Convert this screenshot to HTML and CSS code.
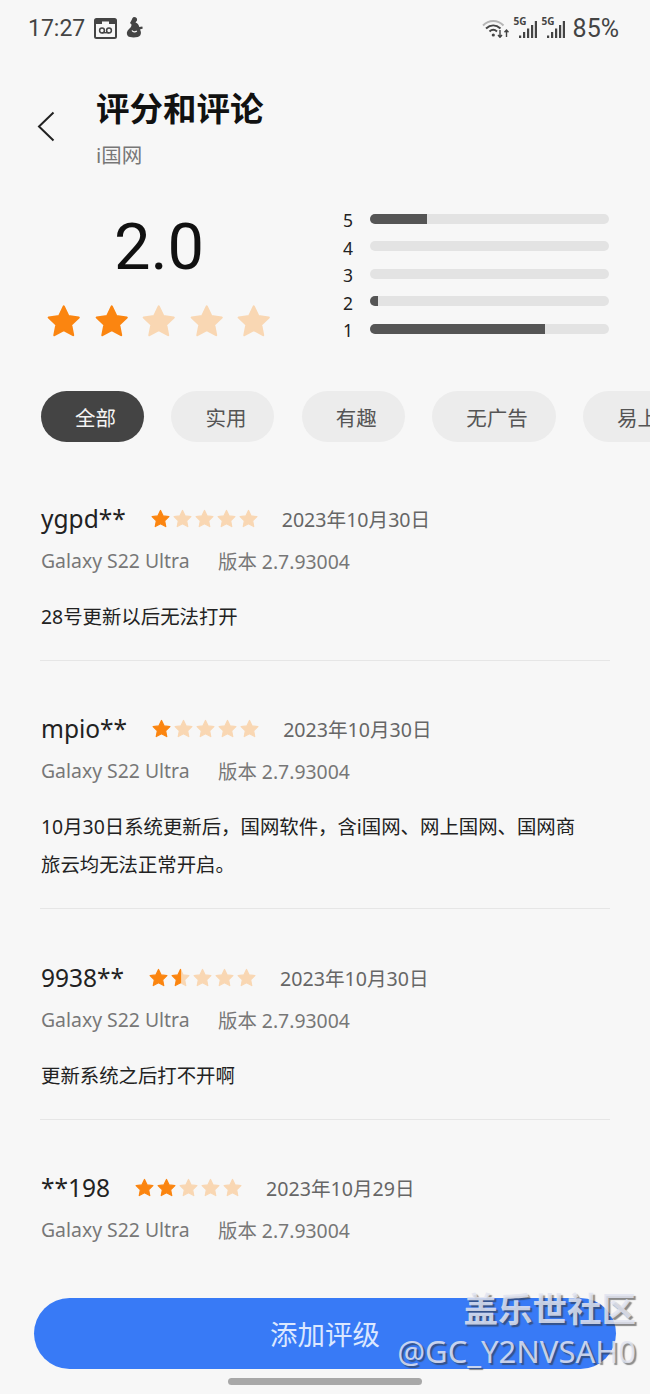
FILE: index.html
```html
<!DOCTYPE html>
<html lang="zh-CN">
<head>
  <meta charset="UTF-8">
  <meta name="viewport" content="width=device-width, initial-scale=1.0">
  <title>评分和评论</title>
  <link rel="stylesheet" href="styles.css">
</head>
<body>
  <svg class="defs" width="0" height="0">
    <defs>
      <symbol id="star" viewBox="0 0 24 24">
        <polygon points="12,2.8 14.9,9 21.6,9.9 16.7,14.5 18,21.2 12,17.9 6,21.2 7.3,14.5 2.4,9.9 9.1,9" stroke-width="1.4" stroke-linejoin="round" fill="currentColor" stroke="currentColor"/>
      </symbol>
      <symbol id="star-half" viewBox="0 0 24 24">
        <polygon points="12,2.8 14.9,9 21.6,9.9 16.7,14.5 18,21.2 12,17.9" stroke-width="1.4" stroke-linejoin="round" fill="#f9d7b3" stroke="#f9d7b3"/>
        <polygon points="12,2.8 12,17.9 6,21.2 7.3,14.5 2.4,9.9 9.1,9" stroke-width="1.4" stroke-linejoin="round" fill="#fb8510" stroke="#fb8510"/>
      </symbol>
      <symbol id="bars" viewBox="0 0 18 17">
        <path d="M0 14.500h2.200V17H0zM4 11h2.200v6H4zM8 7.500h2.200V17H8zM12 4h2.200v13H12zM15.800 0H18v17h-2.200z" fill="#444"/>
      </symbol>
    </defs>
  </svg>

  <div class="page">
    <div class="status">
      <div class="status-left">
        <span class="time">17:27</span>
        <svg class="ico" width="23" height="21" viewBox="0 0 23 21">
          <rect x="1" y="1" width="21" height="19" rx="1.500" fill="none" stroke="#444" stroke-width="2"/>
          <rect x="1" y="1" width="21" height="5" fill="#444"/>
          <rect x="8" y="3.500" width="7" height="3" fill="#f7f7f7"/>
          <circle cx="8" cy="12.500" r="2.400" fill="none" stroke="#444" stroke-width="1.500"/>
          <circle cx="15" cy="12.500" r="2.400" fill="none" stroke="#444" stroke-width="1.500"/>
          <rect x="8" y="14" width="7" height="1.400" fill="#444"/>
        </svg>
        <svg class="ico" width="18" height="22" viewBox="0 0 18 22">
          <path d="M8 0c2.300 0 3.500 1.600 3 3.400L9.500 5.600c2.400.8 3.200 2.500 3.800 4.400l3-.6.500 2-2.800 1c1 1.800 1.400 3.900.3 5.800-1.500 2.700-10 3-12.500.8C.2 17 .6 14 3 12c1.600-1.300 2.600-2.800 2.500-4.600L4 6l2-3.800C6.500 1 7 0 8 0z" fill="#444"/>
          <path d="M6 13.500c1.200 1.800 3.300 1.800 4.800.6" fill="none" stroke="#f7f7f7" stroke-width="1.300"/>
        </svg>
      </div>
      <div class="status-right">
        <svg class="ico" width="27" height="19" viewBox="0 0 27 19">
          <path d="M1 6.500C7 .5 15.500 .5 21.500 6.500" fill="none" stroke="#b5b5b5" stroke-width="2"/>
          <path d="M4 9.500c4.500-4 10-4 14.500 0" fill="none" stroke="#444" stroke-width="2"/>
          <path d="M7.500 12.500c2.500-2.300 5-2.300 7.500 0" fill="none" stroke="#444" stroke-width="2"/>
          <circle cx="11.300" cy="16" r="1.600" fill="#444"/>
          <path d="M18 11v7M16 16l2 2.300 2-2.300M24.500 18v-7M22.500 13.300l2-2.300 2 2.300" fill="none" stroke="#444" stroke-width="1.400"/>
        </svg>
        <span class="signal">
          <span class="five-g">5G</span>
          <svg class="bars-ico" width="18" height="17"><use href="#bars"/></svg>
        </span>
        <span class="signal">
          <span class="five-g">5G</span>
          <svg class="bars-ico" width="18" height="17"><use href="#bars"/></svg>
        </span>
        <span class="battery">85%</span>
      </div>
    </div>

    <div class="header">
      <svg class="back" width="18" height="31" viewBox="0 0 18 31">
        <path d="M16.500 1.500L2 15.500l14.500 14" fill="none" stroke="#222" stroke-width="2"/>
      </svg>
      <div class="header-text">
        <h1 class="title">评分和评论</h1>
        <div class="sub">i国网</div>
      </div>
    </div>

    <div class="summary">
      <div class="score">
        <div class="score-num">2.0</div>
        <div class="stars stars-big">
          <svg class="on"><use href="#star"/></svg>
          <svg class="on"><use href="#star"/></svg>
          <svg class="off"><use href="#star"/></svg>
          <svg class="off"><use href="#star"/></svg>
          <svg class="off"><use href="#star"/></svg>
        </div>
      </div>
      <div class="dist">
        <div class="dist-row"><span class="dist-label">5</span><div class="track"><div class="fill" style="width:24%"></div></div></div>
        <div class="dist-row"><span class="dist-label">4</span><div class="track"></div></div>
        <div class="dist-row"><span class="dist-label">3</span><div class="track"></div></div>
        <div class="dist-row"><span class="dist-label">2</span><div class="track"><div class="fill" style="width:3.4%"></div></div></div>
        <div class="dist-row"><span class="dist-label">1</span><div class="track"><div class="fill" style="width:73.4%"></div></div></div>
      </div>
    </div>

    <div class="chips">
      <span class="chip active">全部</span>
      <span class="chip">实用</span>
      <span class="chip">有趣</span>
      <span class="chip">无广告</span>
      <span class="chip">易上手</span>
    </div>

    <div class="review">
      <div class="review-top">
        <span class="name">ygpd**</span>
        <div class="stars stars-small">
          <svg class="on"><use href="#star"/></svg>
          <svg class="off"><use href="#star"/></svg>
          <svg class="off"><use href="#star"/></svg>
          <svg class="off"><use href="#star"/></svg>
          <svg class="off"><use href="#star"/></svg>
        </div>
        <span class="date">2023年10月30日</span>
      </div>
      <div class="meta"><span class="device">Galaxy S22 Ultra</span><span>版本 2.7.93004</span></div>
      <p class="text">28号更新以后无法打开</p>
    </div>

    <div class="review">
      <div class="review-top">
        <span class="name">mpio**</span>
        <div class="stars stars-small">
          <svg class="on"><use href="#star"/></svg>
          <svg class="off"><use href="#star"/></svg>
          <svg class="off"><use href="#star"/></svg>
          <svg class="off"><use href="#star"/></svg>
          <svg class="off"><use href="#star"/></svg>
        </div>
        <span class="date">2023年10月30日</span>
      </div>
      <div class="meta"><span class="device">Galaxy S22 Ultra</span><span>版本 2.7.93004</span></div>
      <p class="text">10月30日系统更新后，国网软件，含i国网、网上国网、国网商<br>旅云均无法正常开启。</p>
    </div>

    <div class="review">
      <div class="review-top">
        <span class="name">9938**</span>
        <div class="stars stars-small">
          <svg class="on"><use href="#star"/></svg>
          <svg><use href="#star-half"/></svg>
          <svg class="off"><use href="#star"/></svg>
          <svg class="off"><use href="#star"/></svg>
          <svg class="off"><use href="#star"/></svg>
        </div>
        <span class="date">2023年10月30日</span>
      </div>
      <div class="meta"><span class="device">Galaxy S22 Ultra</span><span>版本 2.7.93004</span></div>
      <p class="text">更新系统之后打不开啊</p>
    </div>

    <div class="review last">
      <div class="review-top">
        <span class="name">**198</span>
        <div class="stars stars-small">
          <svg class="on"><use href="#star"/></svg>
          <svg class="on"><use href="#star"/></svg>
          <svg class="off"><use href="#star"/></svg>
          <svg class="off"><use href="#star"/></svg>
          <svg class="off"><use href="#star"/></svg>
        </div>
        <span class="date">2023年10月29日</span>
      </div>
      <div class="meta"><span class="device">Galaxy S22 Ultra</span><span>版本 2.7.93004</span></div>
    </div>

    <a class="add-btn" href="javascript:;">添加评级</a>
    <div class="home-bar"></div>
    <div class="watermark">
      <div class="wm-top">盖乐世社区</div>
      <div class="wm-bottom">@GC_Y2NVSAH0</div>
    </div>
  </div>
</body>
</html>
```

FILE: styles.css
```css
* {
  box-sizing: border-box;
}
html, body {
  margin: 0;
  padding: 0;
}
body {
  background-color: #f7f7f7;
  font-family: "Noto Sans", "Noto Sans CJK SC", sans-serif;
}
.defs {
  position: absolute;
}
.page {
  position: relative;
  width: 650px;
  height: 1394px;
  overflow: hidden;
}

/* status bar */
.status {
  display: flex;
  justify-content: space-between;
  align-items: center;
  height: 58px;
  padding: 0 31px 2px 28px;
  color: #444;
}
.status-left, .status-right {
  display: flex;
  align-items: center;
}
.status-left {
  gap: 9px;
}
.status-right {
  gap: 5px;
}
.time, .battery {
  font-family: Roboto, sans-serif;
  font-size: 23px;
}
.battery {
  font-size: 25px;
  margin-left: 3px;
}
.signal {
  position: relative;
  width: 23px;
  height: 20px;
}
.five-g {
  position: absolute;
  top: -4px;
  left: 0;
  font-size: 10px;
  font-weight: 700;
}
.bars-ico {
  position: absolute;
  right: 0;
  bottom: 0;
}

/* header */
.header {
  display: flex;
  align-items: flex-start;
  padding: 31px 0 0 37px;
}
.back {
  margin-top: 22px;
  margin-right: 41px;
}
.title {
  margin: 0;
  font-size: 33.500px;
  line-height: 38px;
  font-weight: 700;
  color: #111;
}
.sub {
  margin-top: 15px;
  font-size: 20.500px;
  line-height: 26px;
  color: #777;
}

/* rating summary */
.summary {
  display: flex;
  margin-top: 20px;
  height: 190px;
}
.score {
  width: 318px;
  padding: 21px 0 0 45px;
}
.score-num {
  width: 228px;
  font-family: Roboto, sans-serif;
  font-size: 65px;
  line-height: 76px;
  text-align: center;
  color: #111;
}
.stars {
  display: flex;
}
.stars-big {
  gap: 10px;
  margin-top: 17px;
}
.stars-big svg {
  width: 37.500px;
  height: 37.500px;
}
.stars-small {
  gap: 1px;
}
.stars-small svg {
  width: 21px;
  height: 21px;
}
.on {
  color: #fb8510;
}
.off {
  color: #f9d7b3;
}
.dist {
  display: flex;
  flex-direction: column;
  width: 291px;
  padding-top: 17px;
}
.dist-row {
  display: flex;
  align-items: center;
  height: 27.500px;
}
.dist-label {
  width: 52px;
  padding: 3px 0 0 25px;
  font-size: 17.500px;
  color: #222;
}
.track {
  width: 239px;
  height: 10px;
  border-radius: 5px;
  background-color: #e3e3e3;
  overflow: hidden;
}
.fill {
  height: 100%;
  background-color: #555;
}

/* filter chips */
.chips {
  display: flex;
  gap: 27.400px;
  margin-top: 13px;
  margin-bottom: 8px;
  padding-left: 41px;
  overflow: hidden;
}
.chip {
  flex: none;
  height: 51px;
  padding: 0 28px 0 34px;
  border-radius: 26px;
  background-color: #ececec;
  color: #555;
  font-size: 20.500px;
  line-height: 55px;
}
.chip.active {
  background-color: #444;
  color: #f4f4f4;
}

/* reviews */
.review {
  margin: 0 40px;
  padding-top: 50px;
  padding-bottom: 24px;
  border-bottom: 1px solid #e6e6e6;
}
.review.last {
  border-bottom: 0;
}
.review-top {
  display: flex;
  align-items: center;
  height: 36px;
  padding-left: 1px;
}
.name {
  font-size: 24.500px;
  color: #222;
  margin-right: 24px;
}
.date {
  margin-left: 23px;
  font-size: 19.600px;
  color: #666;
}
.meta {
  display: flex;
  margin-top: 9px;
  padding-left: 1px;
  height: 30px;
  align-items: center;
  font-size: 19.400px;
  color: #777;
}
.device {
  width: 177px;
}
.text {
  margin: 22.500px 0 0;
  padding-left: 1px;
  font-size: 19.400px;
  line-height: 38px;
  color: #222;
}

/* bottom */
.add-btn {
  position: absolute;
  left: 34px;
  top: 1298px;
  width: 582px;
  height: 71px;
  border-radius: 36px;
  background-color: #387af6;
  color: #dbe7ff;
  font-size: 27.500px;
  line-height: 74px;
  text-align: center;
  text-decoration: none;
}
.home-bar {
  position: absolute;
  left: 228px;
  top: 1378px;
  width: 194px;
  height: 7px;
  border-radius: 4px;
  background-color: #a8a8a8;
}
.watermark {
  position: absolute;
  right: 14px;
  top: 1288px;
  text-align: right;
  color: rgba(225, 228, 240, 0.85);
  text-shadow: 2px 2px 1px rgba(50, 50, 50, 0.55);
}
.wm-top {
  font-size: 34.500px;
  line-height: 42px;
  font-weight: 700;
}
.wm-bottom {
  font-size: 31px;
  line-height: 43px;
}
```
